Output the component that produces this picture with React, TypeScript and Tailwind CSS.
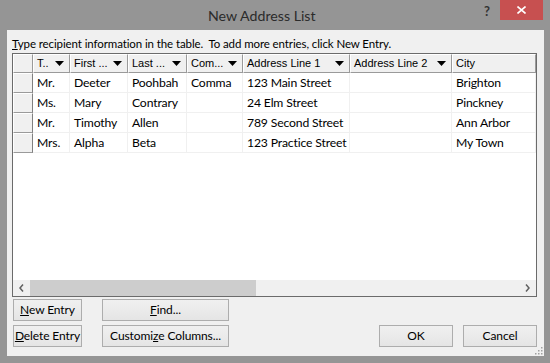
import React from 'react';

const columns = [
  { label: 'T..', width: 'w-[37px]', arrow: true },
  { label: 'First ...', width: 'w-[58px]', arrow: true },
  { label: 'Last ...', width: 'w-[59px]', arrow: true },
  { label: 'Com...', width: 'w-[56px]', arrow: true },
  { label: 'Address Line 1', width: 'w-[107px]', arrow: true },
  { label: 'Address Line 2', width: 'w-[102px]', arrow: true },
  { label: 'City', width: 'w-[84px]', arrow: false },
];

const rows = [
  ['Mr.', 'Deeter', 'Poohbah', 'Comma', '123 Main Street', '', 'Brighton'],
  ['Ms.', 'Mary', 'Contrary', '', '24 Elm Street', '', 'Pinckney'],
  ['Mr.', 'Timothy', 'Allen', '', '789 Second Street', '', 'Ann Arbor'],
  ['Mrs.', 'Alpha', 'Beta', '', '123 Practice Street', '', 'My Town'],
];

const DownArrow = () => (
  <svg width="9" height="5" viewBox="0 0 9 5" className="shrink-0">
    <path d="M0 0h9L4.5 5z" fill="#000" />
  </svg>
);

const Btn = ({ children, className }: { children: React.ReactNode; className: string }) => (
  <button
    className={`h-[22px] border border-[#adadad] bg-gradient-to-b from-[#f0f0f0] to-[#e5e5e5] text-[12px] tracking-[-0.1px] text-black leading-none whitespace-nowrap ${className}`}
  >
    {children}
  </button>
);

const App: React.FC = () => {
  return (
    <div className="w-[550px] h-[363px] bg-[#959595] flex flex-col font-['Lato',sans-serif] overflow-hidden">
      {/* title bar */}
      <div className="h-[30px] relative">
        <div className="absolute left-[208px] top-[5px] text-[14.2px] text-[#2b2b2b]">New Address List</div>
        <div className="absolute left-[484px] top-[2px] text-[13px] font-bold text-[#333]">?</div>
        <div className="absolute left-[500px] top-0 w-[43px] h-[20px] bg-[#c75050] flex items-center justify-center">
          <svg width="9" height="8" viewBox="0 0 9 8">
            <path d="M0.5 0.5l8 7M8.5 0.5l-8 7" stroke="#fff" strokeWidth="1.6" />
          </svg>
        </div>
      </div>

      {/* client area */}
      <div className="ml-[7px] mr-[6px] mb-[7px] flex-1 bg-[#f0f0f0] flex flex-col relative">
        <div className="h-[23px] pl-[5px] pt-[7px] text-[11.5px] tracking-[-0.1px] leading-[14px] text-black">
          <span className="underline">T</span>ype recipient information in the table.&nbsp; To add more entries, click New Entry.
        </div>

        {/* table */}
        <div className="ml-[5px] w-[525px] h-[244px] border border-[#6b6b6b] bg-white flex flex-col">
          <div className="flex h-[19px] bg-[#f0f0f0] font-['Liberation_Sans',sans-serif] text-[11px] text-black">
            <div className="w-[20px] border-t border-l border-white border-r border-r-[#9a9a9a] border-b border-b-[#9a9a9a]" />
            {columns.map((c) => (
              <div
                key={c.label}
                className={`${c.width} flex items-center justify-between pl-[3px] pr-[5px] border-t border-l border-white border-r border-r-[#9a9a9a] border-b border-b-[#9a9a9a]`}
              >
                <span className="whitespace-nowrap">{c.label}</span>
                {c.arrow && <DownArrow />}
              </div>
            ))}
          </div>
          {rows.map((r, i) => (
            <div key={i} className="flex h-[20px] text-[12.2px] tracking-[-0.15px] text-black">
              <div className="w-[20px] bg-[#f0f0f0] border-t border-l border-white border-r border-r-[#808080] border-b border-b-[#9a9a9a]" />
              {r.map((v, j) => (
                <div
                  key={j}
                  className={`${columns[j].width} flex items-center pl-[4px] pt-[2px] border-r border-b border-[#f0f0f0] whitespace-nowrap overflow-hidden`}
                >
                  {v}
                </div>
              ))}
            </div>
          ))}
          <div className="flex-1" />
          {/* horizontal scrollbar */}
          <div className="h-[16px] bg-[#f0f0f0] flex items-center">
            <div className="w-[17px] h-[16px] flex items-center justify-center">
              <svg width="5" height="8" viewBox="0 0 5 8">
                <path d="M4 0.5L1 4l3 3.5" stroke="#606060" strokeWidth="1.5" fill="none" />
              </svg>
            </div>
            <div className="w-[226px] h-[16px] bg-[#cdcdcd]" />
            <div className="flex-1" />
            <div className="w-[17px] h-[16px] flex items-center justify-center">
              <svg width="5" height="8" viewBox="0 0 5 8">
                <path d="M1 0.5L4 4l-3 3.5" stroke="#606060" strokeWidth="1.5" fill="none" />
              </svg>
            </div>
          </div>
        </div>

        {/* buttons */}
        <div className="flex mt-[2px] ml-[6px] mr-[7px]">
          <div className="grid grid-cols-[69px_127px] gap-x-[20px] gap-y-[4px]">
            <Btn className="w-[69px]"><span className="underline">N</span>ew Entry</Btn>
            <Btn className="w-[127px]"><span className="underline">F</span>ind...</Btn>
            <Btn className="w-[69px]"><span className="underline">D</span>elete Entry</Btn>
            <Btn className="w-[127px]">Customi<span className="underline">z</span>e Columns...</Btn>
          </div>
          <div className="flex-1" />
          <div className="flex items-end gap-[10px]">
            <Btn className="w-[74px]">OK</Btn>
            <Btn className="w-[74px]">Cancel</Btn>
          </div>
        </div>

        {/* resize grip */}
        <svg className="absolute right-[1px] bottom-[1px]" width="10" height="10" viewBox="0 0 10 10">
          {[
            [8, 2], [8, 5], [5, 5], [8, 8], [5, 8], [2, 8],
          ].map(([x, y], k) => (
            <rect key={k} x={x} y={y} width="1.5" height="1.5" fill="#a0a0a0" />
          ))}
        </svg>
      </div>
    </div>
  );
};

export default App;
